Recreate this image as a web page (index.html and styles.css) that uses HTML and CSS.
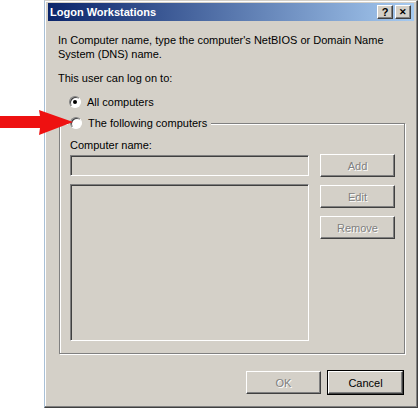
FILE: index.html
```html
<!DOCTYPE html>
<html>
<head>
<meta charset="utf-8">
<link rel="stylesheet" href="styles.css">
</head>
<body>
<div class="window">
  <div class="titlebar">
    <span class="title">Logon Workstations</span>
    <span class="tbtns"><span class="tbtn">?</span><span class="tbtn x">&#x2715;</span></span>
  </div>
  <div class="content">
    <p class="intro">In Computer name, type the computer's NetBIOS or Domain Name System (DNS) name.</p>
    <p class="label">This user can log on to:</p>
    <div class="radio-row"><span class="radio checked"></span><span>All computers</span></div>
    <div class="group">
      <div class="legend"><span class="radio"></span><span>The following computers</span></div>
      <div class="group-body">
        <div class="fields">
          <div class="fieldlabel">Computer name:</div>
          <div class="input"></div>
          <div class="listbox"></div>
        </div>
        <div class="side">
          <div class="btn disabled">Add</div>
          <div class="btn disabled">Edit</div>
          <div class="btn disabled">Remove</div>
        </div>
      </div>
    </div>
    <div class="footer">
      <div class="btn disabled">OK</div>
      <div class="btn default">Cancel</div>
    </div>
  </div>
</div>
<svg class="arrow" width="74" height="28" viewBox="0 0 74 28"><polygon points="0,7 40,7 39,1 73,13 39,26 40,19 0,19" fill="#ee1111"/></svg>
</body>
</html>
```
FILE: styles.css
```css
html, body { margin: 0; padding: 0; background: #fff; }
body { position: relative; width: 418px; height: 410px; font-family: "Liberation Sans", Arial, sans-serif; font-size: 11px; color: #000; }
.window {
  position: relative;
  margin-left: 44px;
  width: 366px;
  height: 402px;
  background: #d4d0c8;
  border-top: 1px solid #d4d0c8;
  border-left: 1px solid #a9c0d6;
  border-right: 1px solid #404040;
  border-bottom: 1px solid #404040;
  box-shadow: inset -1px -1px 0 #808080, inset 1px 1px 0 #fff;
  padding: 2px 3px 2px 3px;
  box-sizing: content-box;
}
.titlebar {
  height: 18px;
  background: linear-gradient(to right, #0a246a, #a6caf0);
  display: flex;
  align-items: center;
  justify-content: space-between;
  padding: 0 3px 0 2px;
}
.title { color: #fff; font-weight: bold; font-size: 11px; }
.tbtns { display: flex; gap: 2px; }
.tbtn {
  width: 16px; height: 14px; box-sizing: border-box;
  background: #d4d0c8;
  border-top: 1px solid #fff; border-left: 1px solid #fff;
  border-right: 1px solid #404040; border-bottom: 1px solid #404040;
  box-shadow: inset -1px -1px 0 #808080;
  font-weight: bold; font-size: 11px; line-height: 12px; text-align: center; color: #000;
}
.tbtn.x { font-size: 9px; line-height: 12px; }
.content { padding: 12px 10px 0 10px; }
.intro { margin: 0; line-height: 14px; width: 340px; }
.label { margin: 10px 0 0 0; line-height: 14px; }
.radio-row { display: flex; align-items: center; gap: 6px; margin: 10px 0 0 11px; height: 14px; }
.radio {
  width: 12px; height: 12px; border-radius: 50%; box-sizing: border-box;
  background: #fff;
  border: 1px solid; border-color: #808080 #fff #fff #808080;
  box-shadow: inset 1px 1px 0 #404040;
  position: relative; display: inline-block; flex: none;
}
.radio.checked::after {
  content: ""; position: absolute; left: 3px; top: 3px; width: 4px; height: 4px; border-radius: 50%; background: #000;
}
.group {
  position: relative;
  margin-top: 14px;
  margin-left: 1px;
  width: 346px;
  border: 1px solid #808080;
  box-shadow: 1px 1px 0 #fff, inset 1px 1px 0 #fff;
  height: 231px;
  box-sizing: border-box;
}
.legend {
  position: absolute; top: -8px; left: 8px;
  background: #d4d0c8; padding: 0 4px 0 2px;
  display: flex; align-items: center; gap: 6px; height: 14px;
}
.group-body { display: flex; padding: 14px 0 0 10px; gap: 11px; }
.fieldlabel { line-height: 14px; height: 14px; }
.input, .listbox {
  width: 239px; box-sizing: border-box;
  border: 1px solid; border-color: #808080 #fff #fff #808080;
  box-shadow: inset 1px 1px 0 #404040;
  background: #d4d0c8;
}
.input { height: 21px; margin-top: 3px; }
.listbox { height: 157px; margin-top: 8px; }
.side { display: flex; flex-direction: column; gap: 8px; padding-top: 16px; }
.btn {
  width: 75px; height: 23px; box-sizing: border-box;
  border: 1px solid; border-color: #fff #404040 #404040 #fff;
  box-shadow: inset -1px -1px 0 #808080;
  display: flex; align-items: center; justify-content: center;
  background: #d4d0c8;
}
.btn.disabled { color: #808080; text-shadow: 1px 1px 0 #fff; }
.btn.default { outline: 1px solid #000; border-color: #fff #404040 #404040 #fff; }
.footer { display: flex; justify-content: flex-end; gap: 7px; margin-top: 17px; padding-right: 1px; }
.arrow { position: absolute; left: 0; top: 109px; }
```
